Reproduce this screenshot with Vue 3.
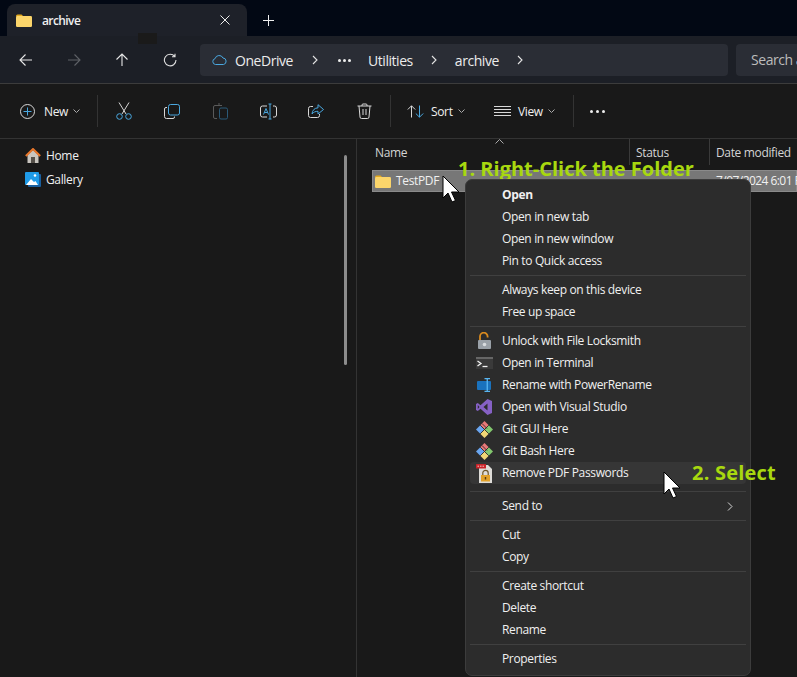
<script setup>
const groups = [
  [{ t: 'Open', bold: true }, { t: 'Open in new tab' }, { t: 'Open in new window' }, { t: 'Pin to Quick access' }],
  [{ t: 'Always keep on this device' }, { t: 'Free up space' }],
  [
    { t: 'Unlock with File Locksmith', i: 'lock' },
    { t: 'Open in Terminal', i: 'term' },
    { t: 'Rename with PowerRename', i: 'rename' },
    { t: 'Open with Visual Studio', i: 'vs' },
    { t: 'Git GUI Here', i: 'git' },
    { t: 'Git Bash Here', i: 'git' },
    { t: 'Remove PDF Passwords', i: 'pdf', hover: true }
  ],
  [{ t: 'Send to', sub: true }],
  [{ t: 'Cut' }, { t: 'Copy' }],
  [{ t: 'Create shortcut' }, { t: 'Delete' }, { t: 'Rename' }],
  [{ t: 'Properties' }]
]
</script>

<template>
  <div class="app">
    <div class="tabstrip">
      <div class="tab">
        <svg class="folder" width="16" height="13" viewBox="0 0 16 13"><path d="M0 2a1.500 1.500 0 0 1 1.500-1.500h4L7.500 2.500H0z" fill="#e3a91f"/><rect y="2" width="16" height="11" rx="1.200" fill="#fbd56b"/></svg>
        <span class="tabtitle">archive</span>
        <svg class="tabclose" width="10" height="10" viewBox="0 0 10 10"><path d="M.5.5l9 9M9.500.5l-9 9" stroke="#eee" fill="none"/></svg>
      </div>
      <svg class="plus" width="11" height="11" viewBox="0 0 11 11"><path d="M5.500 0v11M0 5.500h11" stroke="#eee" fill="none"/></svg>
    </div>

    <div class="addr">
      <div class="navbtn"><svg width="14" height="14" viewBox="0 0 14 14"><path d="M13 7H1M6.500 1.500L1 7l5.500 5.500" stroke="#e8e8e8" fill="none" stroke-width="1.100"/></svg></div>
      <div class="navbtn"><svg width="14" height="14" viewBox="0 0 14 14"><path d="M1 7h12M7.500 1.500L13 7l-5.500 5.500" stroke="#5f6267" fill="none" stroke-width="1.100"/></svg></div>
      <div class="navbtn"><svg width="14" height="14" viewBox="0 0 14 14"><path d="M7 13V1M1.500 6.500L7 1l5.500 5.500" stroke="#e8e8e8" fill="none" stroke-width="1.100"/></svg></div>
      <div class="navbtn"><svg width="14" height="14" viewBox="0 0 14 14"><path d="M11.800 3.500A5.800 5.800 0 1 0 13 7M12 .8v3H9" stroke="#e0e0e0" fill="none" stroke-width="1.100"/></svg></div>
      <div class="crumbs">
        <svg class="cloud" width="15" height="10" viewBox="0 0 15 10"><path d="M3.500 9.500a3 3 0 0 1-.4-5.900A4.200 4.200 0 0 1 11 3a3.300 3.300 0 0 1 .6 6.500z" fill="none" stroke="#4aa8e0"/></svg>
        <span class="crumb c1">OneDrive</span>
        <svg class="chev c2" width="6" height="10" viewBox="0 0 6 10"><path d="M1 1l4 4-4 4" stroke="#e4e4e4" fill="none" stroke-width="1.100"/></svg>
        <span class="crumbdots"><b></b><b></b><b></b></span>
        <span class="crumb c3">Utilities</span>
        <svg class="chev c4" width="6" height="10" viewBox="0 0 6 10"><path d="M1 1l4 4-4 4" stroke="#e4e4e4" fill="none" stroke-width="1.100"/></svg>
        <span class="crumb c5">archive</span>
        <svg class="chev c6" width="6" height="10" viewBox="0 0 6 10"><path d="M1 1l4 4-4 4" stroke="#e4e4e4" fill="none" stroke-width="1.100"/></svg>
      </div>
      <div class="search">Search archive</div>
    </div>

    <div class="toolbar">
      <div class="tnew">
        <svg width="15" height="15" viewBox="0 0 15 15"><circle cx="7.500" cy="7.500" r="7" fill="none" stroke="#d8d8d8"/><path d="M7.500 3.500v8M3.500 7.500h8" stroke="#4aa8e0"/></svg>
        <span>New</span>
        <svg class="caret" width="7" height="4" viewBox="0 0 7 4"><path d="M.5.500l3 3 3-3" stroke="#aaa" fill="none"/></svg>
      </div>
      <i class="tsep"></i>
      <div class="tico first"><svg width="16" height="18" viewBox="0 0 16 18"><path d="M3 .5l7 11.500M13 .5L6 12" stroke="#d8d8d8" fill="none"/><circle cx="3.500" cy="14.500" r="2.800" fill="none" stroke="#4aa8e0"/><circle cx="12.500" cy="14.500" r="2.800" fill="none" stroke="#4aa8e0"/></svg></div>
      <div class="tico"><svg width="16" height="15" viewBox="0 0 16 15"><path d="M3 3.500H2A1.500 1.500 0 0 0 .5 5v7.500A2 2 0 0 0 2.500 14.500H9A1.500 1.500 0 0 0 10.500 13v-.5" fill="none" stroke="#d8d8d8"/><rect x="4.500" y=".5" width="11" height="10.500" rx="2" fill="none" stroke="#4aa8e0"/></svg></div>
      <div class="tico"><svg width="15" height="17" viewBox="0 0 15 17"><path d="M4 2.500H2A1.500 1.500 0 0 0 .5 4v10A1.500 1.500 0 0 0 2 15.500h2M3 2.500h6M5 1h2" fill="none" stroke="#5a5a5a"/><rect x="6.500" y="5" width="8" height="11" rx="1.500" fill="none" stroke="#2b5a78"/></svg></div>
      <div class="tico"><svg width="17" height="17" viewBox="0 0 17 17"><path d="M7 3H2.500A2 2 0 0 0 .5 5v7a2 2 0 0 0 2 2H7M13 3h1.500a2 2 0 0 1 2 2v7a2 2 0 0 1-2 2H13" fill="none" stroke="#d8d8d8"/><path d="M8.500 1h3M10 1v15M8.500 16h3" stroke="#4aa8e0" fill="none"/><path d="M3.500 11.500L6 5.500l2.500 6M4.500 9.500h3" stroke="#4aa8e0" fill="none"/></svg></div>
      <div class="tico"><svg width="16" height="14" viewBox="0 0 16 14"><path d="M5 2.500H2.500a2 2 0 0 0-2 2v7a2 2 0 0 0 2 2h7a2 2 0 0 0 2-2V10" fill="none" stroke="#d8d8d8"/><path d="M10 .7l5.500 4.800L10 10V7.300C7.500 7.300 5.500 8 4 10c.3-3.800 2.500-6 6-6.200z" fill="none" stroke="#4aa8e0"/></svg></div>
      <div class="tico"><svg width="15" height="16" viewBox="0 0 15 16"><path d="M.5 3h14M5 3V2a1 1 0 0 1 1-1h3a1 1 0 0 1 1 1v1M2 3l1 11a1.500 1.500 0 0 0 1.500 1.500h6A1.500 1.500 0 0 0 12 14l1-11M6 6v6M9 6v6" fill="none" stroke="#d8d8d8"/></svg></div>
      <i class="tsep s2"></i>
      <div class="tsort">
        <svg width="17" height="13" viewBox="0 0 17 13"><path d="M4.500 12.500V.8M.8 4.500L4.500.8l3.700 3.700" fill="none" stroke="#d8d8d8"/><path d="M12.500.5v11.700M8.800 8.500l3.700 3.700 3.700-3.700" fill="none" stroke="#4aa8e0"/></svg>
        <span>Sort</span>
        <svg class="caret" width="7" height="4" viewBox="0 0 7 4"><path d="M.5.500l3 3 3-3" stroke="#aaa" fill="none"/></svg>
      </div>
      <div class="tview">
        <svg width="17" height="11" viewBox="0 0 17 11"><path d="M0 .5h17M0 3.500h17M0 6.500h17M0 9.500h17" stroke="#d8d8d8"/></svg>
        <span>View</span>
        <svg class="caret" width="7" height="4" viewBox="0 0 7 4"><path d="M.5.500l3 3 3-3" stroke="#aaa" fill="none"/></svg>
      </div>
      <i class="tsep"></i>
      <div class="tmore"><b></b><b></b><b></b></div>
    </div>

    <div class="main">
      <aside class="side">
        <div class="navitem">
          <svg width="16" height="15" viewBox="0 0 16 15"><path d="M2.500 7v8h11V7L8 2z" fill="#c9c5bf"/><rect x="6" y="9" width="4" height="6" fill="#55504a"/><path d="M.8 8L8 1l7.200 7" fill="none" stroke="#e8762a" stroke-width="2"/></svg>
          <span>Home</span>
        </div>
        <div class="navitem">
          <svg width="16" height="15" viewBox="0 0 16 15"><rect x="3" y="2" width="13" height="13" rx="1" fill="#1a5f9e"/><rect width="14" height="13" rx="1" fill="#1f9be8"/><path d="M1 13l5-6 3 3 1.500-1L13 13z" fill="#fff"/><circle cx="10" cy="3.500" r="1.300" fill="#fff"/></svg>
          <span>Gallery</span>
        </div>
        <div class="scroll"></div>
      </aside>
      <section class="files">
        <div class="head">
          <svg class="sortup" width="9" height="5" viewBox="0 0 9 5"><path d="M.5 4.500l4-4 4 4" fill="none" stroke="#aaa"/></svg>
          <span class="col cname">Name</span>
          <span class="col cstatus">Status</span>
          <span class="col cdate">Date modified</span>
        </div>
        <div class="row">
          <svg class="folder" width="16" height="13" viewBox="0 0 16 13"><path d="M0 2a1.500 1.500 0 0 1 1.500-1.500h4L7.500 2.500H0z" fill="#e3a91f"/><rect y="2" width="16" height="11" rx="1.200" fill="#fbd56b"/></svg>
          <span class="rowname">TestPDF</span>
          <span class="rowdate">7/07/2024 6:01 PM</span>
        </div>
      </section>
    </div>

    <div class="note n1">1. Right-Click the Folder</div>

    <div class="menu">
      <template v-for="(g, gi) in groups" :key="gi">
        <i v-if="gi" class="msep" :class="{ wide: gi === 3 }"></i>
        <div v-for="m in g" :key="m.t" class="mitem" :class="{ bold: m.bold, hover: m.hover }">
          <span class="micon">
            <svg v-if="m.i === 'lock'" width="16" height="18" viewBox="0 0 16 18"><path d="M4 9V4.500a3.800 3.800 0 0 1 7.600 0v1" fill="none" stroke="#d98a1f" stroke-width="1.800"/><rect x="2" y="8" width="13" height="9" rx="1" fill="#9aa1a8"/><circle cx="8.500" cy="12.500" r="1.800" fill="#d8dcdf"/></svg>
            <svg v-else-if="m.i === 'term'" width="17" height="12" viewBox="0 0 17 12"><rect width="17" height="12" fill="#3a3a3a"/><rect width="17" height="2" fill="#666"/><path d="M1.500 4l3.500 2.500L1.500 9" fill="none" stroke="#f2f2f2" stroke-width="1.300"/><path d="M6.500 9.500h5" stroke="#f2f2f2" stroke-width="1.300"/></svg>
            <svg v-else-if="m.i === 'rename'" width="15" height="14" viewBox="0 0 15 14"><rect y="3" width="14" height="9" rx="1" fill="#1a72bd"/><path d="M7.500.5h5.500M10.250.5v13M7.500 13.500h5.500" stroke="#58b6f2" fill="none" stroke-width="1.300"/></svg>
            <svg v-else-if="m.i === 'vs'" width="16" height="16" viewBox="0 0 16 16"><path d="M11.500 0L16 2v12l-4.500 2L4.500 9.800 1.800 12 0 11V5l1.800-1 2.700 2.200zM11.500 4.500L7.500 8l4 3.500zM1.800 6v4L3.500 8z" fill="#8661c5" fill-rule="evenodd"/></svg>
            <svg v-else-if="m.i === 'git'" width="17" height="17" viewBox="0 0 17 17"><path d="M8.500 0l4.250 4.250L8.500 8.500 4.250 4.250z" fill="#e87878"/><path d="M4.250 4.250L8.500 8.500l-4.250 4.250L0 8.500z" fill="#6aa6f0"/><path d="M12.750 4.250L17 8.500l-4.250 4.250L8.500 8.500z" fill="#82c76e"/><path d="M8.500 8.500l4.250 4.250L8.500 17l-4.250-4.250z" fill="#f0d676"/><path d="M4.250 4.250l8.500 8.500M12.750 4.250l-8.500 8.500M6 2.500l5 5" stroke="#2c2c2c" stroke-width=".9"/></svg>
            <svg v-else-if="m.i === 'pdf'" width="17" height="19" viewBox="0 0 17 19"><path d="M3 1h9l4 4v14H3z" fill="#dedcd8"/><rect y="0" width="10" height="4.500" rx=".5" fill="#c8242a"/><path d="M1.500 2.200h7" stroke="#f4c9c9" stroke-dasharray="1.500 1"/><path d="M6.800 11V9a2.700 2.700 0 0 1 5.400 0v2" fill="none" stroke="#6f5626" stroke-width="1.200"/><rect x="5" y="11" width="9" height="6.500" fill="#e2a128"/><rect x="8.800" y="13" width="1.400" height="2.500" fill="#5a3d10"/></svg>
          </span>
          <span class="mtext">{{ m.t }}</span>
          <svg v-if="m.sub" class="msub" width="6" height="9" viewBox="0 0 6 9"><path d="M1 .5l4 4-4 4" fill="none" stroke="#d8d8d8"/></svg>
        </div>
      </template>
    </div>

    <div class="note n2">2. Select</div>

    <svg class="cursor k1" width="18" height="28" viewBox="0 0 18 28"><path d="M1 1v22l5-5 4 9 3.500-1.500-4-8.500H17z" fill="#fff" stroke="#000"/></svg>
    <svg class="cursor k2" width="18" height="28" viewBox="0 0 18 28"><path d="M1 1v22l5-5 4 9 3.500-1.500-4-8.500H17z" fill="#fff" stroke="#000"/></svg>
    <i class="smudge"></i>
  </div>
</template>

<style>
html, body { margin: 0; background: #191919; }
</style>

<style scoped>
.app {
  position: relative;
  width: 797px;
  height: 677px;
  overflow: hidden;
  display: flex;
  flex-direction: column;
  background: #191919;
  color: #f0f0f0;
  font-family: "Open Sans", "Liberation Sans", sans-serif;
  font-size: 12px;
  letter-spacing: -0.35px;
}
.tabstrip {
  height: 36px;
  flex: none;
  background: #020814;
  display: flex;
  align-items: flex-end;
  padding-left: 7px;
}
.tab {
  width: 240px;
  height: 32px;
  box-sizing: border-box;
  background: #1e2129;
  border-radius: 8px 8px 0 0;
  display: flex;
  align-items: center;
  padding-left: 9px;
}
.tabtitle { margin-left: 10px; font-size: 12px; font-weight: 600; flex: 1; letter-spacing: -.6px; }
.tabclose { margin-right: 17px; }
.plus { margin: 0 0 10px 16px; }
.addr {
  height: 48px;
  flex: none;
  box-sizing: border-box;
  background: #1c1f26;
  border-bottom: 1px solid #3c3c3c;
  display: flex;
  align-items: center;
  padding: 1px 0 0 2px;
}
.navbtn { width: 48px; flex: none; display: flex; justify-content: center; }
.crumbs {
  margin-left: 6px;
  width: 528px;
  height: 32px;
  flex: none;
  background: #2a2d35;
  border-radius: 4px;
  display: flex;
  align-items: center;
  padding-left: 12px;
  box-sizing: border-box;
  font-size: 14px;
  letter-spacing: -0.45px;
}
.crumb { color: #ececec; }
.c1 { margin-left: 8px; }
.c2 { margin-left: 19px; }
.crumbdots { margin-left: 20px; display: flex; gap: 2px; }
.crumbdots b { width: 3px; height: 3px; border-radius: 50%; background: #eee; }
.c3 { margin-left: 17px; }
.c4 { margin-left: 18px; }
.c5 { margin-left: 18px; }
.c6 { margin-left: 18px; }
.search {
  margin-left: 8px;
  flex: none;
  width: 120px;
  height: 32px;
  line-height: 32px;
  background: #2a2d35;
  border-radius: 4px;
  padding-left: 15px;
  font-size: 14px;
  letter-spacing: -0.45px;
  color: #bcbcbc;
  white-space: nowrap;
}
.toolbar {
  height: 55px;
  flex: none;
  box-sizing: border-box;
  display: flex;
  align-items: center;
  background: #191919;
  border-bottom: 1px solid #333;
}
.tnew { width: 97px; flex: none; display: flex; align-items: center; padding-left: 20px; box-sizing: border-box; }
.tnew span { margin-left: 9px; }
.caret { margin-left: 5px; }
.tsep { width: 1px; height: 32px; background: #333; flex: none; }
.tico { width: 48px; flex: none; display: flex; justify-content: center; }
.tico.first { margin-left: 2px; }
.s2 { margin-left: 2px; }
.tsort { margin-left: 16px; display: flex; align-items: center; width: 87px; flex: none; }
.tsort span { margin-left: 7px; }
.tview { display: flex; align-items: center; width: 79px; flex: none; }
.tview span { margin-left: 7px; }
.tmore { margin-left: 16px; display: flex; gap: 3px; }
.tmore b { width: 3px; height: 3px; border-radius: 50%; background: #eee; }
.main { flex: 1; display: flex; min-height: 0; }
.side {
  width: 357px;
  flex: none;
  box-sizing: border-box;
  border-right: 1px solid #333;
  padding-top: 4px;
  position: relative;
}
.navitem { height: 24px; display: flex; align-items: center; padding-left: 25px; }
.navitem span { margin-left: 5px; }
.scroll { position: absolute; left: 344px; top: 16px; width: 3px; height: 210px; border-radius: 2px; background: #8c8c8c; }
.files { flex: 1; min-width: 0; }
.head { height: 26px; position: relative; }
.sortup { position: absolute; left: 138px; top: 0; }
.col { position: absolute; top: 0; height: 26px; line-height: 27px; color: #d4d4d4; }
.cname { left: 18px; }
.cstatus { left: 272px; padding-left: 6px; border-left: 1px solid #3a3a3a; }
.cdate { left: 352px; padding-left: 6px; border-left: 1px solid #3a3a3a; white-space: nowrap; }
.row {
  margin: 5px 0 0 15px;
  height: 22px;
  background: #777;
  box-shadow: inset 0 0 0 1px #8a8a8a;
  display: flex;
  align-items: center;
  padding-left: 3px;
  position: relative;
  white-space: nowrap;
}
.rowname { margin-left: 5px; margin-bottom: 1px; }
.rowdate { position: absolute; left: 344px; top: 2px; letter-spacing: -.55px; }
.menu {
  position: absolute;
  left: 465px;
  top: 179px;
  width: 286px;
  height: 497px;
  box-sizing: border-box;
  background: #2c2c2c;
  border: 1px solid #3c3c3c;
  border-radius: 7px;
  padding: 4px;
  color: #f0f0f0;
}
.mitem { height: 22px; display: flex; align-items: center; border-radius: 4px; position: relative; }
.mitem.bold { font-weight: 700; }
.mitem.hover { background: #363636; }
.mtext { margin-bottom: 2px; }
.micon { width: 32px; flex: none; display: flex; justify-content: center; padding-right: 4px; box-sizing: border-box; }
.msub { position: absolute; right: 13px; top: 7px; }
.msep { display: block; height: 1px; background: #404040; margin: 3px 0; }
.msep.wide { margin-top: 7px; }
.note {
  position: absolute;
  font-weight: 700;
  font-size: 20px;
  line-height: 24px;
  letter-spacing: 0;
  color: #a8d80f;
  white-space: nowrap;
}
.n1 { left: 458px; top: 157px; }
.n2 { left: 692px; top: 461px; letter-spacing: .2px; }
.cursor { position: absolute; }
.k1 { left: 442px; top: 175px; }
.k2 { left: 663px; top: 471px; }
.smudge { position: absolute; left: 138px; top: 33px; width: 19px; height: 11px; background: #1a1a1a; }
</style>
